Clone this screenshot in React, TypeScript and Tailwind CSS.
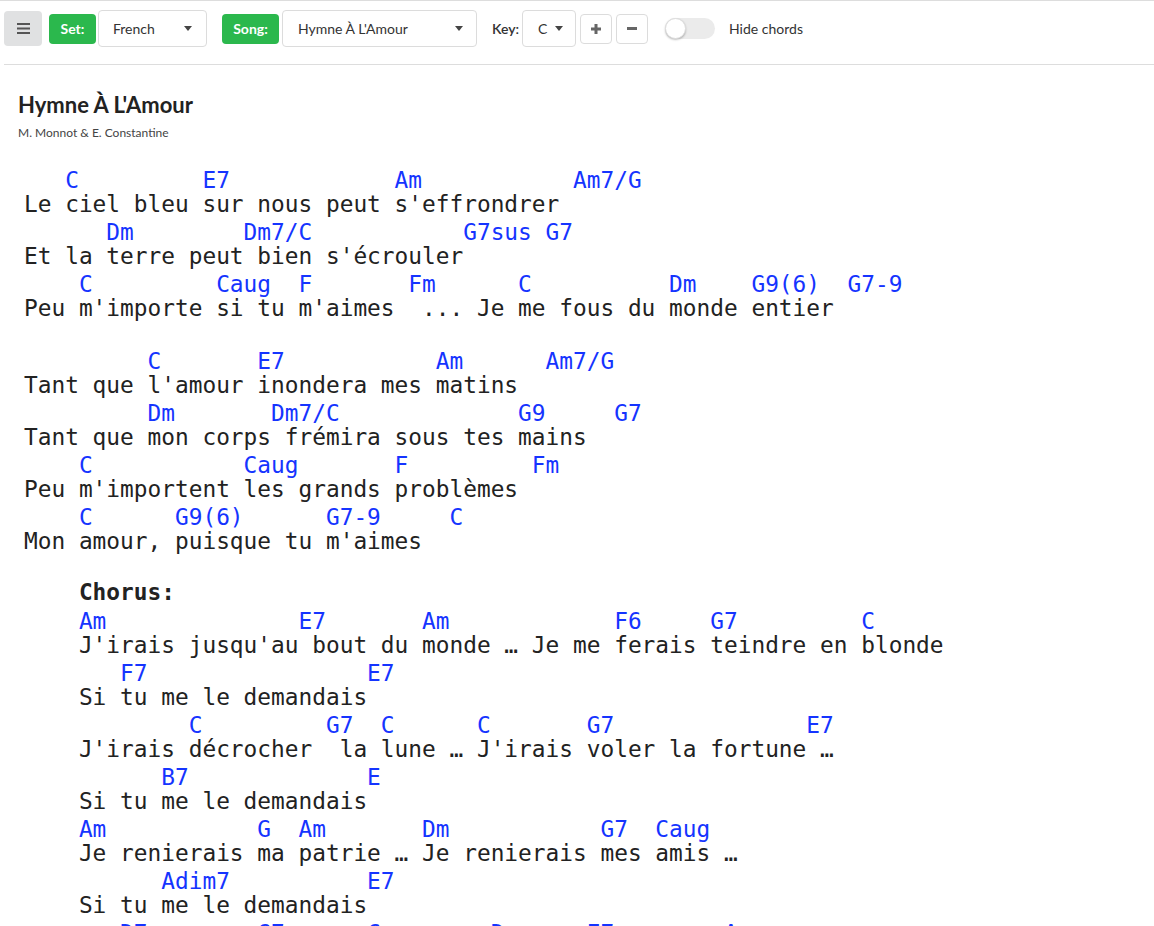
import React, { useState } from "react";

type Chord = [number, string];

// builds a chord line by placing each chord at its column
const at = (chords: Chord[]) => {
  let line = "";
  chords.forEach(([col, name]) => {
    while (line.length < col) line += " ";
    line += name;
  });
  return line;
};

interface SongLine {
  chords?: Chord[];
  text: string;
}

const verses: SongLine[][] = [
  [
    { chords: [[3, "C"], [13, "E7"], [27, "Am"], [40, "Am7/G"]], text: "Le ciel bleu sur nous peut s'effrondrer" },
    { chords: [[6, "Dm"], [16, "Dm7/C"], [32, "G7sus"], [38, "G7"]], text: "Et la terre peut bien s'écrouler" },
    {
      chords: [[4, "C"], [14, "Caug"], [20, "F"], [28, "Fm"], [36, "C"], [47, "Dm"], [53, "G9(6)"], [60, "G7-9"]],
      text: "Peu m'importe si tu m'aimes  ... Je me fous du monde entier",
    },
  ],
  [
    { chords: [[9, "C"], [17, "E7"], [30, "Am"], [38, "Am7/G"]], text: "Tant que l'amour inondera mes matins" },
    { chords: [[9, "Dm"], [18, "Dm7/C"], [36, "G9"], [43, "G7"]], text: "Tant que mon corps frémira sous tes mains" },
    { chords: [[4, "C"], [16, "Caug"], [27, "F"], [37, "Fm"]], text: "Peu m'importent les grands problèmes" },
    { chords: [[4, "C"], [11, "G9(6)"], [22, "G7-9"], [31, "C"]], text: "Mon amour, puisque tu m'aimes" },
  ],
];

const chorus: SongLine[] = [
  {
    chords: [[0, "Am"], [16, "E7"], [25, "Am"], [39, "F6"], [46, "G7"], [57, "C"]],
    text: "J'irais jusqu'au bout du monde … Je me ferais teindre en blonde",
  },
  { chords: [[3, "F7"], [21, "E7"]], text: "Si tu me le demandais" },
  {
    chords: [[8, "C"], [18, "G7"], [22, "C"], [29, "C"], [37, "G7"], [53, "E7"]],
    text: "J'irais décrocher  la lune … J'irais voler la fortune …",
  },
  { chords: [[6, "B7"], [21, "E"]], text: "Si tu me le demandais" },
  {
    chords: [[0, "Am"], [13, "G"], [16, "Am"], [25, "Dm"], [38, "G7"], [42, "Caug"]],
    text: "Je renierais ma patrie … Je renierais mes amis …",
  },
  { chords: [[6, "Adim7"], [21, "E7"]], text: "Si tu me le demandais" },
  {
    chords: [[3, "D7"], [13, "G7"], [21, "C"], [30, "Dm"], [37, "E7"], [47, "Am"]],
    text: "On peut bien rire de moi, je ferais n'importe quoi",
  },
  { chords: [[6, "F7"], [21, "E7"]], text: "Si tu me le demandais" },
];

const Caret = () => (
  <svg width="8" height="5" viewBox="0 0 8 5" className="ml-auto">
    <path d="M0 0h8L4 5z" fill="#444" />
  </svg>
);

const Lines = ({ lines, hide }: { lines: SongLine[]; hide: boolean }) => (
  <>
    {lines.map((l, i) => (
      <div key={i}>
        {!hide && l.chords && <div className="pt-[3px] text-[#1534ff]">{at(l.chords) || " "}</div>}
        <div className="leading-[23px]">{l.text}</div>
      </div>
    ))}
  </>
);

export default function App() {
  const [hideChords, setHideChords] = useState(false);

  return (
    <div className="min-h-screen bg-white text-[#333] font-['Lato','Noto_Sans',sans-serif]">
      {/* Toolbar */}
      <div className="border-t border-[#ddd]">
        <div className="ml-1 flex h-[55px] items-center">
          <button className="flex h-[35px] w-[38px] items-center justify-center rounded-[4px] bg-[#e0e1e2]">
            <svg width="13" height="11" viewBox="0 0 13 11">
              <rect y="0" width="13" height="2" fill="#555" />
              <rect y="4.5" width="13" height="2" fill="#555" />
              <rect y="9" width="13" height="2" fill="#555" />
            </svg>
          </button>

          <span className="ml-[7px] flex h-[30px] w-[47px] items-center justify-center rounded-[4px] bg-[#2bb84d] text-[14px] font-bold text-white">
            Set:
          </span>
          <div className="ml-[2px] flex h-[37px] w-[109px] items-center rounded-[4px] border border-[#dcdcdc] pl-[14px] pr-[14px] text-[14px] text-[#333]">
            French
            <Caret />
          </div>

          <span className="ml-[15px] flex h-[30px] w-[57px] items-center justify-center rounded-[4px] bg-[#2bb84d] text-[14px] font-bold text-white">
            Song:
          </span>
          <div className="ml-[3px] flex h-[37px] w-[195px] items-center rounded-[4px] border border-[#dcdcdc] pl-[15px] pr-[13px] text-[14px] text-[#333]">
            Hymne À L'Amour
            <Caret />
          </div>

          <span className="ml-[15px] text-[14px] font-semibold text-[#333]">Key:</span>
          <div className="ml-[3px] flex h-[37px] w-[54px] items-center rounded-[4px] border border-[#dcdcdc] pl-[15px] pr-[12px] text-[14px] text-[#333]">
            C
            <Caret />
          </div>
          <button className="ml-[4px] flex h-[30px] w-[32px] items-center justify-center rounded-[4px] border border-[#dcdcdc]">
            <svg width="10" height="10" viewBox="0 0 10 10">
              <rect x="0" y="3.5" width="10" height="3" fill="#666" />
              <rect x="3.5" y="0" width="3" height="10" fill="#666" />
            </svg>
          </button>
          <button className="ml-[4px] flex h-[30px] w-[32px] items-center justify-center rounded-[4px] border border-[#dcdcdc]">
            <svg width="10" height="3" viewBox="0 0 10 3">
              <rect x="0" y="0" width="10" height="3" fill="#666" />
            </svg>
          </button>

          <button
            onClick={() => setHideChords(!hideChords)}
            className="ml-[17px] flex h-[21px] w-[50px] items-center rounded-full bg-[#ebebeb]"
          >
            <span className="h-[21px] w-[21px] rounded-full border border-[#ddd] bg-white shadow-[0_1px_2px_rgba(0,0,0,0.25)]" />
          </button>
          <span className="ml-[14px] text-[14px] text-[#333]">Hide chords</span>
        </div>
        <div className="ml-1 mt-[8px] border-b border-[#ddd]" />
      </div>

      {/* Song */}
      <div className="px-[18px]">
        <h1 className="mt-[27px] text-[22px] font-bold leading-[26px] text-[#222]">Hymne À L'Amour</h1>
        <p className="mt-[6px] text-[12px] text-[#444]">M. Monnot &amp; E. Constantine</p>

        <div className="mt-[22px] whitespace-pre pl-[6px] font-['DejaVu_Sans_Mono',monospace] text-[22.8px] leading-[26px] text-[#222]">
          <Lines lines={verses[0]} hide={hideChords} />
          <div className="h-[25px]" />
          <Lines lines={verses[1]} hide={hideChords} />
          <div className="h-[25px]" />
          <div className="pl-[4ch]">
            <div className="pt-[2px] font-bold leading-[25px]">Chorus:</div>
            <Lines lines={chorus} hide={hideChords} />
          </div>
        </div>
      </div>
    </div>
  );
}
